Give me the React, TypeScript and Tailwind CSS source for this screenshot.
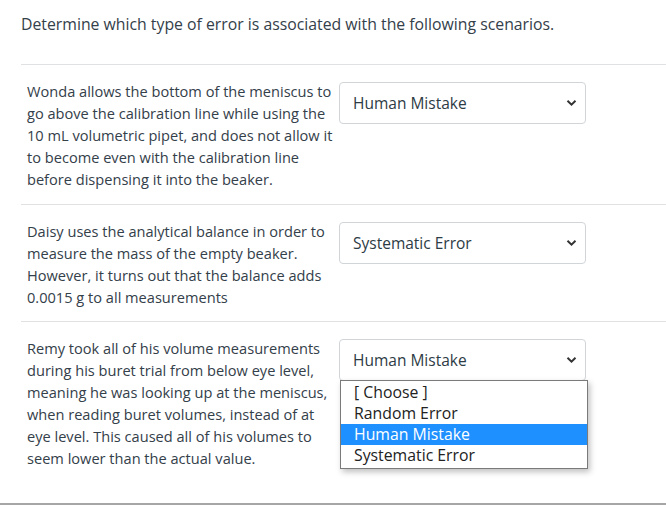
import React from "react";

const Chevron = () => (
  <svg width="11" height="8" viewBox="0 0 11 8" className="shrink-0">
    <path d="M1.5 1.8 L5.5 5.6 L9.5 1.8" fill="none" stroke="#333" strokeWidth="2" />
  </svg>
);

const Select = ({ value }: { value: string }) => (
  <div className="flex items-center justify-between w-[247px] h-[42px] rounded-[4px] border border-[#d1d5d8] bg-white shrink-0 mt-[2px] pl-[13px] pr-[8px]">
    <span className="text-[15.5px] leading-[20px] text-[#2d3b45]">{value}</span>
    <Chevron />
  </div>
);

const Row = ({ lines, value, children, extra }: { lines: string[]; value: string; children?: React.ReactNode; extra?: string }) => (
  <div className={`flex gap-[6px] border-t border-[#dfe1e3] pl-[6px] pt-[15px] ${extra ?? ""}`}>
    <div className="w-[306px] shrink-0 text-[14.6px] leading-[22px] text-[#34404a]">
      {lines.map((l, i) => (
        <div key={i} className="whitespace-nowrap">{l}</div>
      ))}
    </div>
    <div className="relative">
      <Select value={value} />
      {children}
    </div>
  </div>
);

export default function App() {
  return (
    <div className="flex flex-col w-[666px] h-[506px] bg-white overflow-hidden" style={{ fontFamily: "'Open Sans', sans-serif" }}>
      <div className="pl-[21px] pt-[14px]">
        <div className="text-[15.8px] leading-[20px] text-[#34404a] h-[50px]">
          Determine which type of error is associated with the following scenarios.
        </div>
        <Row
          value="Human Mistake"
          extra="h-[140px]"
          lines={[
            "Wonda allows the bottom of the meniscus to",
            "go above the calibration line while using the",
            "10 mL volumetric pipet, and does not allow it",
            "to become even with the calibration line",
            "before dispensing it into the beaker.",
          ]}
        />
        <Row
          value="Systematic Error"
          extra="h-[117px]"
          lines={[
            "Daisy uses the analytical balance in order to",
            "measure the mass of the empty beaker.",
            "However, it turns out that the balance adds",
            "0.0015 g to all measurements",
          ]}
        />
        <Row
          value="Human Mistake"
          extra="h-[182px]"
          lines={[
            "Remy took all of his volume measurements",
            "during his buret trial from below eye level,",
            "meaning he was looking up at the meniscus,",
            "when reading buret volumes, instead of at",
            "eye level. This caused all of his volumes to",
            "seem lower than the actual value.",
          ]}
        >
          <div className="absolute left-[1px] top-[43px] w-[248px] h-[89px] bg-white border border-[#7a7a7a] shadow-[2px_3px_6px_rgba(0,0,0,0.25)] text-[15.8px] leading-[21px] text-[#222]">
            <div className="pl-[13px] mt-[1px]">[ Choose ]</div>
            <div className="pl-[13px]">Random Error</div>
            <div className="pl-[13px] bg-[#1e90ff] text-white">Human Mistake</div>
            <div className="pl-[13px]">Systematic Error</div>
          </div>
        </Row>
      </div>
      <div className="h-[2px] bg-[#a6a6a6] shrink-0" />
    </div>
  );
}
